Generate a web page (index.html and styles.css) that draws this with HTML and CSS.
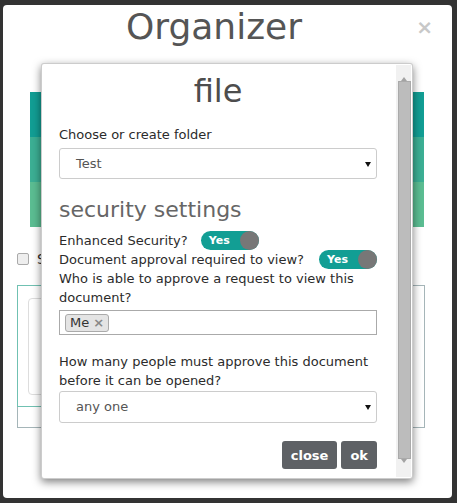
FILE: index.html
```html
<!DOCTYPE html>
<html lang="en">
<head>
    <meta charset="UTF-8">
    <title>Organizer</title>
    <link rel="stylesheet" href="styles.css">
</head>
<body>
    <div class="modal">
        <div class="modal-header">
            <h1 class="modal-title">Organizer</h1>
            <span class="close">&times;</span>
        </div>

        <!-- Page content behind the file dialog -->
        <div class="stripes">
            <div class="stripe stripe-1"></div>
            <div class="stripe stripe-2"></div>
            <div class="stripe stripe-3"></div>
        </div>
        <label class="check-row"><span class="checkbox"></span>S</label>
        <div class="panel">
            <div class="panel-inner">
                <div class="card"></div>
            </div>
        </div>

        <!-- File dialog -->
        <div class="dialog">
            <div class="dialog-body">
                <h2 class="dialog-title">file</h2>
                <div class="field-label">Choose or create folder</div>
                <div class="select">Test</div>

                <h3 class="section-title">security settings</h3>
                <div class="toggle-row">
                    <span>Enhanced Security?</span>
                    <span class="toggle first"><span class="toggle-text">Yes</span><span class="knob"></span></span>
                </div>
                <div class="toggle-row">
                    <span>Document approval required to view?</span>
                    <span class="toggle push"><span class="toggle-text">Yes</span><span class="knob"></span></span>
                </div>
                <div class="text-block">Who is able to approve a request to view this document?</div>
                <div class="tag-input">
                    <span class="tag">Me <span class="tag-remove">&times;</span></span>
                </div>

                <div class="text-block spaced">How many people must approve this document before it can be opened?</div>
                <div class="select tight">any one</div>

                <div class="actions">
                    <button class="btn">close</button>
                    <button class="btn">ok</button>
                </div>
            </div>
            <div class="scrollbar">
                <span class="arrow up"></span>
                <span class="thumb"></span>
                <span class="arrow down"></span>
            </div>
        </div>
    </div>
</body>
</html>
```

FILE: styles.css
```css
body {
    margin: 0;
    background-color: #333;
    font-family: "DejaVu Sans", Verdana, sans-serif;
    color: #2b2b2b;
}

.modal {
    position: relative;
    margin: 5px 5px 5px 3px;
    height: 493px;
    background: #fff;
    border-radius: 4px;
    overflow: hidden;
}

.modal-header {
    display: flex;
    padding: 2px 15px 0;
}

.modal-title {
    flex: 1;
    margin: 0;
    font-size: 36px;
    line-height: 40px;
    font-weight: normal;
    text-align: center;
    color: #555;
}

.close {
    width: 27px;
    padding-right: 4px;
    box-sizing: border-box;
    text-align: right;
    font-size: 20px;
    line-height: 40px;
    font-weight: bold;
    color: #c8c8c8;
}

.stripes {
    margin: 45px 0 0 27px;
    width: 394px;
}

.stripe {
    height: 45px;
}

.stripe-1 { background: #129e94; }
.stripe-2 { background: #3caf94; }
.stripe-3 { background: #5bbd92; }

.check-row {
    display: flex;
    align-items: center;
    height: 16px;
    margin: 24px 0 0 14px;
    font-size: 14px;
}

.checkbox {
    width: 10px;
    height: 10px;
    margin-right: 8px;
    border: 1px solid #aaa;
    border-radius: 2px;
    background: #eee;
}

.panel {
    margin: 18px 0 0 14px;
    width: 406px;
    height: 141px;
    border: 1px solid #a5b5b8;
}

.panel-inner {
    margin: -1px 0 0 -1px;
    width: 300px;
    height: 120px;
    border: 1px solid #70c1b2;
}

.card {
    margin: 12px 0 0 10px;
    width: 200px;
    height: 95px;
    border: 1px solid #ddd;
    border-radius: 4px;
}

/* dialog sits over the organizer content */
.dialog {
    position: absolute;
    left: 38px;
    top: 58px;
    width: 372px;
    height: 416px;
    box-sizing: border-box;
    display: flex;
    background: #fff;
    border: 1px solid rgba(0,0,0,0.2);
    border-radius: 3px;
    box-shadow: 0 3px 9px rgba(0,0,0,0.5);
}

.dialog-body {
    flex: 1;
    padding: 9px 19px 0 17px;
    font-size: 13px;
    line-height: 19px;
}

.dialog-title {
    margin: 0;
    font-size: 32px;
    line-height: 36px;
    font-weight: normal;
    text-align: center;
    color: #4d4d4d;
}

.field-label {
    margin-top: 16px;
}

.select {
    position: relative;
    margin-top: 4px;
    height: 31px;
    box-sizing: border-box;
    padding-left: 16px;
    border: 1px solid #ccc;
    border-radius: 3px;
    line-height: 29px;
    color: #555;
}

.select.tight {
    margin-top: 1px;
    height: 32px;
    line-height: 30px;
}

.select::after {
    content: "";
    position: absolute;
    right: 5px;
    top: 13px;
    border-left: 3px solid transparent;
    border-right: 3px solid transparent;
    border-top: 5px solid #111;
}

.section-title {
    margin: 18px 0 0;
    font-size: 22px;
    line-height: 26px;
    font-weight: normal;
    color: #666;
}

.toggle-row {
    display: flex;
    align-items: flex-start;
    height: 19px;
}

.section-title + .toggle-row {
    margin-top: 8px;
}

.toggle {
    display: flex;
    align-items: center;
    width: 58px;
    height: 19px;
    border-radius: 10px;
    background: #129e94;
}

.toggle.first {
    margin-left: 13px;
}

.toggle.push {
    margin-left: auto;
}

.toggle-text {
    padding-left: 8px;
    font-size: 11px;
    line-height: 15px;
    font-weight: bold;
    color: #fff;
}

.knob {
    margin-left: auto;
    width: 19px;
    height: 19px;
    border-radius: 50%;
    background: #777;
}

.tag-input {
    margin-top: 3px;
    height: 25px;
    box-sizing: border-box;
    padding: 2px 5px;
    border: 1px solid #aaa;
}

.tag {
    display: inline-flex;
    align-items: center;
    height: 18px;
    box-sizing: border-box;
    padding: 0 4px;
    border: 1px solid #aaa;
    border-radius: 3px;
    background: #e4e4e4;
    color: #333;
}

.tag-remove {
    margin-left: 4px;
    font-weight: bold;
    color: #888;
}

.text-block.spaced {
    margin-top: 17px;
}

.actions {
    display: flex;
    justify-content: flex-end;
    gap: 4px;
    margin-top: 18px;
}

.btn {
    height: 28px;
    padding: 0 9px;
    border: none;
    border-radius: 3px;
    background: #5e6165;
    color: #fff;
    font-family: inherit;
    font-size: 13px;
    font-weight: bold;
}

.scrollbar {
    display: flex;
    flex-direction: column;
    align-items: center;
    width: 15px;
    margin: 1px 1px 1px 0;
    background: #f1f1f1;
}

.thumb {
    flex: 1;
    width: 11px;
    margin: 0 0 0 1px;
    background: #bcbcbc;
    border: 1px solid #aaa;
}

.arrow {
    height: 16px;
    width: 0;
    box-sizing: border-box;
    border-left: 3px solid transparent;
    border-right: 3px solid transparent;
}

.arrow.up {
    border-bottom: 4px solid #a3a3a3;
    border-top: 6px solid transparent;
    height: 16px;
}

.arrow.down {
    border-top: 4px solid #a3a3a3;
    border-bottom: 8px solid transparent;
    height: 18px;
}
```
